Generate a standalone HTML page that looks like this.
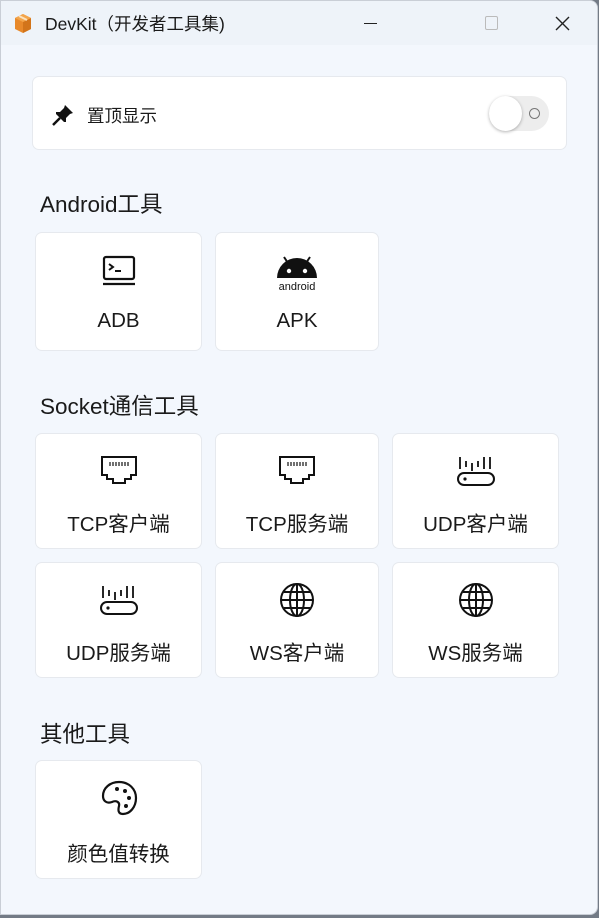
<!DOCTYPE html>
<html><head><meta charset="utf-8"><style>
*{margin:0;padding:0;box-sizing:border-box}
body{width:599px;height:918px;background:#737b86;overflow:hidden;font-family:"Liberation Sans","Noto Sans CJK SC",sans-serif;color:#1a1a1a;position:relative}
.win{position:absolute;left:0;top:0;width:598px;height:915px;background:#f3f7fd;border-radius:0 8px 8px 0;border:1px solid #c9ced6;overflow:hidden}
.tb{position:absolute;left:0;top:0;width:100%;height:44px;background:#eef3f9}
.title{position:absolute;left:44px;top:10px;font-size:17.5px}
.card{position:absolute;background:#fff;border:1px solid #e6e9ee;border-radius:7px}
.h{position:absolute;left:39px;font-size:22.5px}
.lbl{position:absolute;left:0;right:0;text-align:center;font-size:20.5px}
.ic{position:absolute;left:50%;transform:translateX(-50%)}
</style></head><body><div class="win">
<div class="tb">
<svg style="position:absolute;left:12px;top:11px" width="20" height="22" viewBox="0 0 20 22"><path d="M2 6 L10 2 L18 6 L18 17 L10 21 L2 17Z" fill="#e8892a"/><path d="M10 10 L18 6 L18 17 L10 21Z" fill="#d2741a"/><path d="M2 6 L10 2 L18 6 L10 10Z" fill="#f3a54b"/><path d="M6 4 L14 8" stroke="#fbe2c0" stroke-width="2"/></svg>
<div class="title">DevKit（开发者工具集)</div>
<div style="position:absolute;left:363px;top:22px;width:13px;height:1px;background:#222"></div>
<div style="position:absolute;left:484px;top:15px;width:13px;height:14px;border:1px solid #bbb;border-radius:2px"></div>
<svg style="position:absolute;left:554px;top:15px" width="15" height="15"><path d="M1 1L14 14M14 1L1 14" stroke="#222" stroke-width="1.4"/></svg>
</div>
<div class="card" style="left:31px;top:75px;width:535px;height:74px">
<svg style="position:absolute;left:18px;top:26px" width="24" height="24" viewBox="0 0 24 24"><path d="M14 2 L22 10 L19 11 L15 15 L15 19 L13 19 L5 11 L5 9 L9 9 L13 5Z" fill="#111"/><path d="M9 15 L2 22" stroke="#111" stroke-width="2.5"/></svg>
<div style="position:absolute;left:54px;top:26px;font-size:17.5px">置顶显示</div>
<div style="position:absolute;left:456px;top:19px;width:60px;height:35px;border-radius:18px;background:#ededed"></div>
<div style="position:absolute;left:456px;top:19px;width:33px;height:35px;border-radius:50%;background:#fff;box-shadow:0 1px 3px rgba(0,0,0,.3)"></div>
<div style="position:absolute;left:496px;top:31px;width:11px;height:11px;border-radius:50%;border:1.5px solid #777"></div>
</div>
<div class="h" style="top:186px">Android工具</div>
<div class="card" style="left:34px;top:231px;width:167px;height:119px">
<svg class="ic" style="top:21px" width="36" height="34" viewBox="0 0 36 34"><rect x="3" y="3" width="30" height="22" rx="2" fill="none" stroke="#111" stroke-width="2.2"/><path d="M8 10 L12 13 L8 16 M14 17 L20 17" stroke="#111" stroke-width="2" fill="none"/><path d="M2 30 H34" stroke="#111" stroke-width="2.2"/></svg>
<div class="lbl" style="top:76px">ADB</div></div>
<div class="card" style="left:214px;top:231px;width:164px;height:119px">
<svg class="ic" style="top:14px" width="46" height="46" viewBox="0 0 46 46"><path d="M3 31 A20 20 0 0 1 43 31Z" fill="#111"/><path d="M10 10 L14 16 M36 10 L32 16" stroke="#111" stroke-width="2"/><circle cx="15" cy="24" r="2.2" fill="#fff"/><circle cx="31" cy="24" r="2.2" fill="#fff"/><text x="23" y="43" text-anchor="middle" font-size="11" font-family="Liberation Sans" fill="#111">android</text></svg>
<div class="lbl" style="top:76px">APK</div></div>
<div class="h" style="top:388px">Socket通信工具</div>
<div class="card" style="left:34px;top:432px;width:167px;height:116px"><svg class="ic" style="top:21px" width="38" height="30" viewBox="0 0 38 30"><path d="M2 2 H36 V20 H31 V24 H25 V28 H13 V24 H7 V20 H2Z" fill="none" stroke="#111" stroke-width="2"/><path d="M10 7v4M13 7v4M16 7v4M19 7v4M22 7v4M25 7v4M28 7v4" stroke="#111" stroke-width="1.2"/></svg><div class="lbl" style="top:73px">TCP客户端</div></div>
<div class="card" style="left:214px;top:432px;width:164px;height:116px"><svg class="ic" style="top:21px" width="38" height="30" viewBox="0 0 38 30"><path d="M2 2 H36 V20 H31 V24 H25 V28 H13 V24 H7 V20 H2Z" fill="none" stroke="#111" stroke-width="2"/><path d="M10 7v4M13 7v4M16 7v4M19 7v4M22 7v4M25 7v4M28 7v4" stroke="#111" stroke-width="1.2"/></svg><div class="lbl" style="top:73px">TCP服务端</div></div>
<div class="card" style="left:391px;top:432px;width:167px;height:116px"><svg class="ic" style="top:21px" width="40" height="32" viewBox="0 0 40 32"><rect x="2" y="18" width="36" height="12" rx="6" fill="none" stroke="#111" stroke-width="2"/><circle cx="9" cy="24" r="1.6" fill="#111"/><path d="M4 2v12M10 6v6M16 8v8M22 6v6M28 2v12M34 2v12" stroke="#111" stroke-width="1.8"/></svg><div class="lbl" style="top:73px">UDP客户端</div></div>
<div class="card" style="left:34px;top:561px;width:167px;height:116px"><svg class="ic" style="top:21px" width="40" height="32" viewBox="0 0 40 32"><rect x="2" y="18" width="36" height="12" rx="6" fill="none" stroke="#111" stroke-width="2"/><circle cx="9" cy="24" r="1.6" fill="#111"/><path d="M4 2v12M10 6v6M16 8v8M22 6v6M28 2v12M34 2v12" stroke="#111" stroke-width="1.8"/></svg><div class="lbl" style="top:73px">UDP服务端</div></div>
<div class="card" style="left:214px;top:561px;width:164px;height:116px"><svg class="ic" style="top:19px" width="36" height="36" viewBox="0 0 36 36"><circle cx="18" cy="18" r="16" fill="none" stroke="#111" stroke-width="2"/><ellipse cx="18" cy="18" rx="7" ry="16" fill="none" stroke="#111" stroke-width="2"/><path d="M18 2v32M2 18h32M5 10h26M5 26h26" stroke="#111" stroke-width="2"/></svg><div class="lbl" style="top:73px">WS客户端</div></div>
<div class="card" style="left:391px;top:561px;width:167px;height:116px"><svg class="ic" style="top:19px" width="36" height="36" viewBox="0 0 36 36"><circle cx="18" cy="18" r="16" fill="none" stroke="#111" stroke-width="2"/><ellipse cx="18" cy="18" rx="7" ry="16" fill="none" stroke="#111" stroke-width="2"/><path d="M18 2v32M2 18h32M5 10h26M5 26h26" stroke="#111" stroke-width="2"/></svg><div class="lbl" style="top:73px">WS服务端</div></div>
<div class="h" style="top:716px">其他工具</div>
<div class="card" style="left:34px;top:759px;width:167px;height:119px"><svg class="ic" style="top:18px" width="40" height="38" viewBox="0 0 40 38"><path d="M20 3 C30 3 37 10 37 19 C37 28 31 35 24 35 C19 35 19 31 20 27 C21 23 17 21 13 23 C8 25 4 22 4 17 C4 9 11 3 20 3Z" fill="none" stroke="#111" stroke-width="2.2"/><circle cx="18" cy="10" r="2" fill="#111"/><circle cx="26" cy="12" r="2" fill="#111"/><circle cx="30" cy="19" r="2" fill="#111"/><circle cx="27" cy="27" r="2" fill="#111"/></svg><div class="lbl" style="top:76px">颜色值转换</div></div>
</div></body></html>
